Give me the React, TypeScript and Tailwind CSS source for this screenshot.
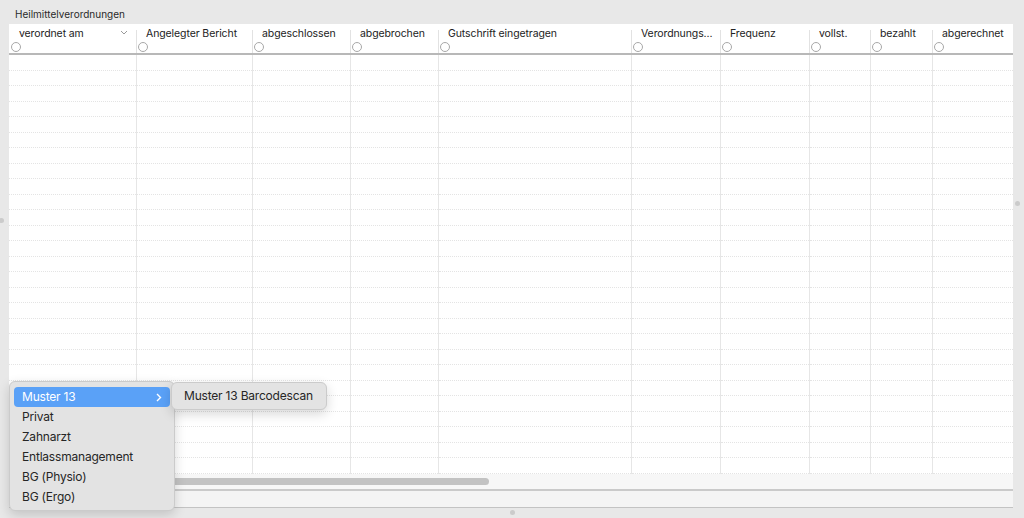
import React from 'react'

const columns = [
  { label: 'verordnet am', width: 127, sort: true },
  { label: 'Angelegter Bericht', width: 116 },
  { label: 'abgeschlossen', width: 98 },
  { label: 'abgebrochen', width: 88 },
  { label: 'Gutschrift eingetragen', width: 193 },
  { label: 'Verordnungs...', width: 89 },
  { label: 'Frequenz', width: 89 },
  { label: 'vollst.', width: 61 },
  { label: 'bezahlt', width: 62 },
  { label: 'abgerechnet', width: 81 },
]

const rows = Array.from({ length: 27 })

const menuItems = ['Muster 13', 'Privat', 'Zahnarzt', 'Entlassmanagement', 'BG (Physio)', 'BG (Ergo)']

function Handle({ className }: { className?: string }) {
  return <div className={`w-[5px] h-[5px] rounded-full bg-[#cbcbcb] ${className ?? ''}`} />
}

function HeaderCell({ label, width, sort, first }: { label: string; width: number; sort?: boolean; first?: boolean }) {
  return (
    <div className="relative flex flex-col shrink-0 pt-[3px]" style={{ width }}>
      {!first && <div className="absolute left-0 top-[6px] bottom-0 w-px bg-[#e2e2e2]" />}
      <div className="h-[14px] flex items-center pl-[10px] pr-[8px] text-[10.5px] leading-[14px] tracking-[-0.1px] text-[#222]">
        <span className="whitespace-nowrap">{label}</span>
        {sort && (
          <svg className="ml-auto mb-[3px]" width="8" height="5" viewBox="0 0 8 5">
            <path d="M1 1 L4 4 L7 1" fill="none" stroke="#9a9a9a" strokeWidth="1" />
          </svg>
        )}
      </div>
      <div className="h-[10px] flex items-start pl-[2px] mt-[0.5px]">
        <div className="w-[10px] h-[10px] rounded-full border border-[#a8a8a8] bg-white" />
      </div>
    </div>
  )
}

export default function App() {
  return (
    <div
      className="w-[1024px] h-[518px] bg-[#e8e8e8] flex flex-col overflow-hidden relative"
      style={{ fontFamily: 'Inter, "Liberation Sans", Arial, sans-serif' }}
    >
      <div className="h-[24px] pl-[15px] pt-[8px] text-[10px] leading-[12px] text-[#2a2a2a]">
        Heilmittelverordnungen
      </div>

      <div className="flex h-[484px]">
        <div className="w-[9px] flex flex-col">
          <Handle className="mt-[194px] -ml-[1px]" />
        </div>

        <div className="w-[1004px] flex flex-col bg-white">
          {/* header */}
          <div className="flex h-[31px] border-b-2 border-[#b8b8b8]">
            {columns.map((c, i) => (
              <HeaderCell key={c.label} label={c.label} width={c.width} sort={c.sort} first={i === 0} />
            ))}
          </div>

          {/* body */}
          <div className="flex h-[419px]">
            {columns.map((c, i) => (
              <div
                key={c.label}
                className={`flex flex-col shrink-0 ${i > 0 ? 'border-l border-[#e6e6e6]' : ''}`}
                style={{ width: c.width }}
              >
                {rows.map((_, r) => (
                  <div key={r} className="h-[15.5px] shrink-0 border-b border-dotted border-[#e4e4e4]" />
                ))}
              </div>
            ))}
          </div>

          {/* horizontal scroller */}
          <div className="h-[15px] bg-[#f7f7f7] flex items-center pl-[2px]">
            <div className="h-[7px] w-[478px] rounded-full bg-[#c3c3c3]" />
          </div>
          <div className="flex-1 bg-[#f4f4f4] border-t-2 border-b border-t-[#cacaca] border-b-[#c3c3c3]" />
        </div>

        <div className="w-[11px] flex flex-col">
          <Handle className="mt-[177px] ml-[2px]" />
        </div>
      </div>

      <div className="flex-1 flex justify-center">
        <Handle className="mt-[2px]" />
      </div>

      {/* context menu */}
      <div className="absolute left-[9px] top-[381px] w-[166px] h-[130px] rounded-[6px] bg-[#e3e3e3] border border-[#cbcbcb] shadow-[0_4px_12px_rgba(0,0,0,0.16)] pt-[5px] px-[4px]">
        {menuItems.map((item, i) => (
          <div
            key={item}
            className={`h-[20px] flex items-center pl-[8px] pr-[8px] text-[12px] tracking-[-0.2px] rounded-[4px] ${
              i === 0 ? 'bg-[#5aa1f7] text-white' : 'text-[#262626]'
            }`}
          >
            <span>{item}</span>
            {i === 0 && (
              <svg className="ml-auto" width="6" height="9" viewBox="0 0 6 9">
                <path d="M1 1 L4.5 4.5 L1 8" fill="none" stroke="white" strokeWidth="1.4" />
              </svg>
            )}
          </div>
        ))}
      </div>

      {/* submenu */}
      <div className="absolute left-[171px] top-[382px] w-[156px] h-[28px] rounded-[6px] bg-[#e3e3e3] border border-[#cbcbcb] shadow-[0_4px_12px_rgba(0,0,0,0.16)] flex items-center pl-[12px] text-[12px] tracking-[-0.2px] text-[#262626]">
        Muster 13 Barcodescan
      </div>
    </div>
  )
}
